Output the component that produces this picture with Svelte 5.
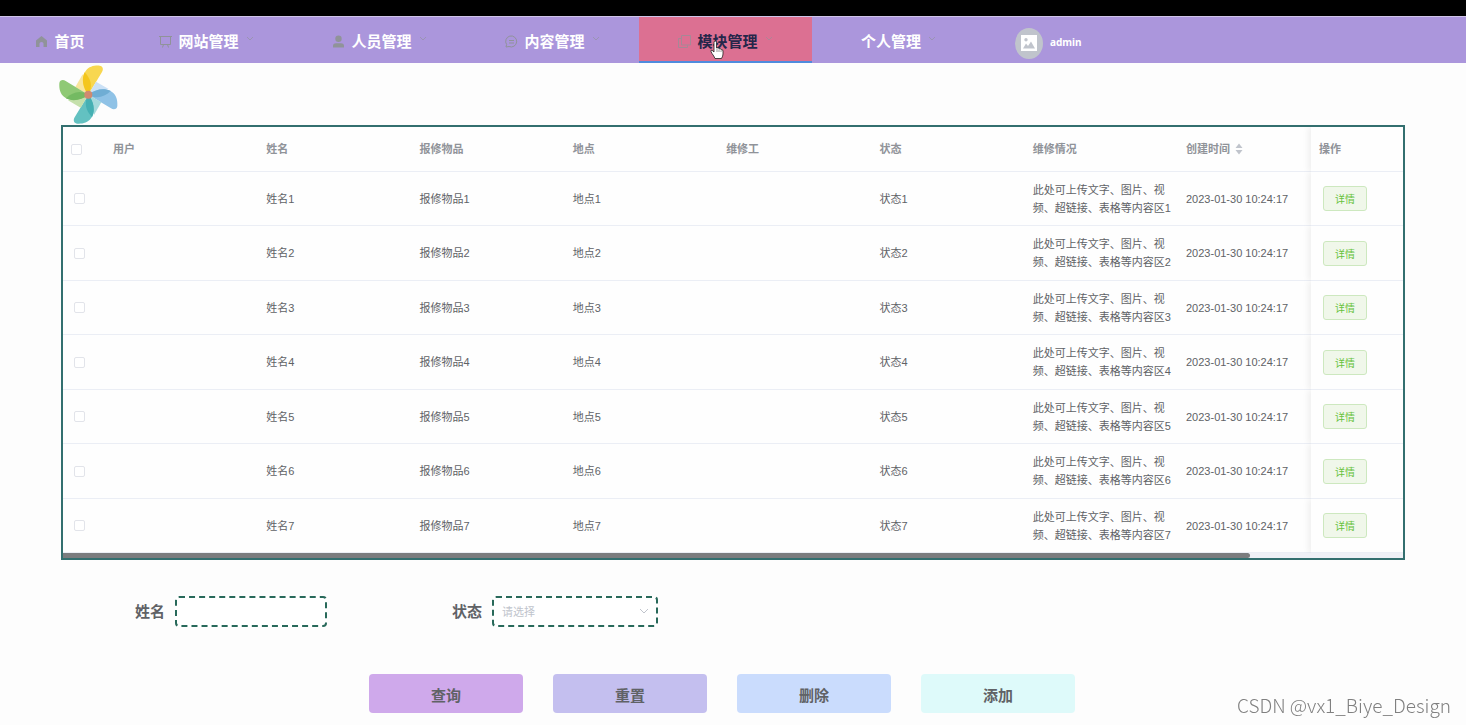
<script>
    const menus = [
        { label: "网站管理", icon: "board" },
        { label: "人员管理", icon: "user" },
        { label: "内容管理", icon: "chat" },
        { label: "模块管理", icon: "copy" },
        { label: "个人管理", icon: "" }
    ];

    const columns = ["用户", "姓名", "报修物品", "地点", "维修工", "状态", "维修情况"];
    const rows = [1, 2, 3, 4, 5, 6, 7];

    const blades = [
        { angle: 0, light: "#f9e59c", main: "#f8d750", dark: "#f4c61c" },
        { angle: 90, light: "#cbe1f6", main: "#8fc2e6", dark: "#6fadd4" },
        { angle: 180, light: "#a5dadc", main: "#63c1c1", dark: "#45b0b3" },
        { angle: 270, light: "#c5e0ac", main: "#8fc975", dark: "#74ba62" }
    ];

    let active = $state("模块管理");
    let name = $state("");
    let status = $state("");
    let checked = $state([]);

    function toggleAll(e) {
        checked = e.target.checked ? [...rows] : [];
    }

    function reset() {
        name = "";
        status = "";
    }
</script>

<div class="top-strip"></div>

<nav class="nav">
    <button class="nav-item home" class:active={active === "首页"} onclick={() => (active = "首页")}>
        <svg class="icon" viewBox="0 0 13 13"><path d="M6.500 1 L12 5.500 V12 H8.500 V8.500 Q8.500 7 6.500 7 Q4.500 7 4.500 8.500 V12 H1 V5.500 Z" fill="currentColor" /></svg>
        <span>首页</span>
    </button>

    {#each menus as menu}
        <button class="nav-item" class:active={active === menu.label} onclick={() => (active = menu.label)}>
            {#if menu.icon === "board"}
                <svg class="icon line" viewBox="0 0 13 13"><path d="M0 1.500 H13 M1.500 1.500 V9.500 H11.500 V1.500 M4.500 9.500 L3.500 12.500 M8.500 9.500 L9.500 12.500" /></svg>
            {:else if menu.icon === "user"}
                <svg class="icon" viewBox="0 0 13 13"><circle cx="6.500" cy="3.800" r="3.200" fill="currentColor" /><path d="M1 12.500 V11 Q1 8.200 4 8.200 H9 Q12 8.200 12 11 V12.500 Z" fill="currentColor" /></svg>
            {:else if menu.icon === "chat"}
                <svg class="icon line" viewBox="0 0 13 13"><path d="M1 12 L1.600 9.500 A5.500 5.500 0 1 1 4 11.500 Z M4 5.500 H9 M4 8 H9" /></svg>
            {:else if menu.icon === "copy"}
                <svg class="icon line faint" viewBox="0 0 13 13"><path d="M3.500 0.500 H12.500 V10 H3.500 Z M3.500 3.500 H0.500 V12.500 H9.500 V10" /></svg>
            {/if}
            <span>{menu.label}</span>
            <svg class="arrow" viewBox="0 0 8 8"><path d="M1 2 L4 5 L7 2" /></svg>

            {#if menu.label === "模块管理"}
                <svg class="pointer" viewBox="0 0 14 20">
                    <path d="M4 12 V2.500 Q4 1 5.300 1 Q6.500 1 6.500 2.500 V8 Q8.800 7 9 8.800 Q11 8 11.200 9.800 Q13 9.300 13 11 V14 Q13 16 11.500 18.500 H5 Q4 16 2 13.500 L1 11.500 Q0.500 10 2 10.200 Z" fill="#fff" stroke="#222" stroke-width="0.800" />
                    <path d="M7 9 V12 M9 9.500 V12 M11 10.500 V12" stroke="#555" stroke-width="0.600" />
                </svg>
            {/if}
        </button>
    {/each}

    <div class="account">
        <span class="avatar">
            <svg viewBox="0 0 16 16"><path fill-rule="evenodd" d="M0 0 H16 V16 H0 Z M2 13.500 H14 L10 6.500 L7 11 L5 8.500 Z M5 3 A1.700 1.700 0 1 0 5 6.400 A1.700 1.700 0 1 0 5 3 Z" fill="#fff" /></svg>
        </span>
        <span class="account-name">admin</span>
    </div>
</nav>

<main>
    <svg class="logo" viewBox="-88 -89 177 177">
        {#each blades as blade}
            <g transform="rotate({blade.angle})">
                <path d="M0 0 L-39 -23 L-17 -61 Z" fill={blade.light} />
                <path d="M0 0 C-17 -22 -22 -55 -8 -71 C2 -85 18 -88 34 -87 C44 -86 46 -76 41 -68 Z" fill={blade.main} />
                <path d="M0 0 C-17 -20 -21 -48 -11 -67 C8 -47 14 -25 0 0 Z" fill={blade.dark} />
            </g>
        {/each}
        <circle r="12" fill="#d08a70" />
    </svg>

    <div class="table-box">
        <table>
            <thead>
                <tr>
                    <th class="check">
                        <input type="checkbox" aria-label="全选" checked={checked.length === rows.length} onchange={toggleAll} />
                    </th>
                    {#each columns as column}
                        <th>{column}</th>
                    {/each}
                    <th class="time">
                        创建时间
                        <svg class="sort" viewBox="0 0 8 12"><path d="M4 0.500 L7.500 5 H0.500 Z M4 11.500 L7.500 7 H0.500 Z" fill="#c0c4cc" /></svg>
                    </th>
                    <th class="action">操作</th>
                </tr>
            </thead>
            <tbody>
                {#each rows as n}
                    <tr>
                        <td class="check">
                            <input type="checkbox" aria-label="选择姓名{n}" value={n} bind:group={checked} />
                        </td>
                        <td></td>
                        <td>姓名{n}</td>
                        <td>报修物品{n}</td>
                        <td>地点{n}</td>
                        <td></td>
                        <td>状态{n}</td>
                        <td>此处可上传文字、图片、视频、超链接、表格等内容区{n}</td>
                        <td>2023-01-30 10:24:17</td>
                        <td class="action"><button class="detail">详情</button></td>
                    </tr>
                {/each}
            </tbody>
        </table>
        <div class="scrollbar"><div class="thumb"></div></div>
    </div>

    <form onsubmit={(e) => e.preventDefault()}>
        <div class="fields">
            <div class="field">
                <label for="name">姓名</label>
                <input id="name" type="text" bind:value={name} />
            </div>
            <div class="field">
                <label for="status">状态</label>
                <div class="select">
                    <select id="status" bind:value={status}>
                        <option value="">请选择</option>
                        {#each rows as n}
                            <option value={n}>状态{n}</option>
                        {/each}
                    </select>
                    <svg viewBox="0 0 10 10"><path d="M1 3 L5 7 L9 3" /></svg>
                </div>
            </div>
        </div>

        <div class="buttons">
            <button class="search">查询</button>
            <button class="reset" type="button" onclick={reset}>重置</button>
            <button class="delete" type="button">删除</button>
            <button class="add" type="button">添加</button>
        </div>
    </form>
</main>

<div class="watermark">CSDN @vx1_Biye_Design</div>

<style>
    :global(body) {
        margin: 0;
        background: #fdfdfd;
        color: #606266;
        font-family: "Liberation Sans", "Noto Sans CJK SC", sans-serif;
        font-size: 11px;
    }

    * {
        box-sizing: border-box;
    }

    button, input, select {
        font-family: inherit;
        margin: 0;
    }

    button {
        cursor: pointer;
    }

    .top-strip {
        height: 16px;
        background: #000;
    }

    .nav {
        display: flex;
        height: 47px;
        background: #ab96dc;
        border-top: 1px solid #cfc4e8;
    }

    .nav-item {
        position: relative;
        display: flex;
        align-items: center;
        justify-content: center;
        width: 173px;
        padding: 3px 0 0;
        border: 0;
        border-bottom: 2px solid transparent;
        background: none;
        color: #fff;
        font-size: 15px;
        font-weight: bold;
    }

    .nav-item.home {
        width: 120px;
    }

    .nav-item.active {
        background: #dc7092;
        border-bottom-color: #4f8bdd;
        color: #26264a;
    }

    .icon {
        width: 13px;
        height: 13px;
        margin: 2px 6px 0 0;
        color: #909399;
    }

    .icon.line, .arrow {
        fill: none;
        stroke: #909399;
    }

    .icon.faint {
        opacity: 0.7;
    }

    .arrow {
        width: 8px;
        height: 8px;
        margin: 0 0 4px 7px;
        opacity: 0.6;
    }

    .pointer {
        position: absolute;
        left: 71px;
        top: 23px;
        width: 14px;
        height: 20px;
        fill: none;
    }

    .account {
        display: flex;
        align-items: center;
        gap: 7px;
        padding: 6px 0 0 30px;
    }

    .account-name {
        padding-bottom: 3px;
        color: #fff;
        font-family: "Noto Sans", sans-serif;
        font-size: 10px;
        font-weight: bold;
    }

    .avatar {
        display: flex;
        align-items: center;
        justify-content: center;
        width: 28px;
        height: 31px;
        border-radius: 50%;
        background: #c0c4cc;
    }

    .avatar svg {
        width: 16px;
        height: 16px;
    }

    main {
        padding: 2px 61px 0;
    }

    .logo {
        display: block;
        width: 59px;
        height: 59px;
        margin: 0 0 1px -2px;
    }

    .table-box {
        border: 2px solid #336f6f;
        background: #fefefe;
    }

    table {
        width: 100%;
        table-layout: fixed;
        border-collapse: separate;
        border-spacing: 0;
    }

    th, td {
        padding: 0 4px 0 8px;
        border-bottom: 1px solid #ebeef5;
        line-height: 18px;
        text-align: left;
    }

    th {
        height: 45px;
        color: #909399;
        font-weight: bold;
    }

    td {
        height: 54px;
    }

    tr:nth-child(even) td {
        height: 55px;
    }

    th.check {
        width: 42px;
    }

    td.check {
        padding-left: 11px;
    }

    th.time {
        width: 133px;
    }

    .sort {
        width: 8px;
        height: 12px;
        margin-left: 2px;
        vertical-align: -2px;
    }

    .action {
        width: 92px;
        box-shadow: -3px 0 6px rgba(0, 0, 0, 0.06);
        clip-path: inset(0 0 0 -10px);
    }

    td.action {
        padding-left: 12px;
    }

    input[type="checkbox"] {
        display: block;
        appearance: none;
        width: 11px;
        height: 11px;
        border: 1px solid #e2e4ea;
        border-radius: 2px;
        background: #fff;
    }

    input[type="checkbox"]:checked {
        background: #409eff;
    }

    .detail {
        display: block;
        width: 44px;
        height: 25px;
        padding: 0;
        border: 1px solid #cde8bf;
        border-radius: 3px;
        background: #f0f7ea;
        color: #67c23a;
        font-size: 10px;
    }

    .scrollbar {
        height: 5px;
        background: #eff0f6;
    }

    .thumb {
        width: 88.6%;
        height: 5px;
        border-radius: 0 3px 3px 0;
        background: #7b7c7e;
    }

    .fields {
        display: flex;
        gap: 125px;
        padding: 36px 0 0 74px;
    }

    .field {
        display: flex;
        align-items: center;
        gap: 10px;
    }

    .field label {
        padding-bottom: 2px;
        font-size: 15px;
        font-weight: bold;
    }

    .field input, .field select {
        width: 152px;
        height: 31px;
        padding: 0 8px;
        border: 2px dashed #28695a;
        border-radius: 4px;
        background: #fff;
        color: #606266;
        font-size: 11px;
        outline: none;
    }

    .field select {
        appearance: none;
        width: 166px;
        color: #c0c4cc;
    }

    .select {
        position: relative;
    }

    .select svg {
        position: absolute;
        right: 9px;
        top: 10px;
        width: 10px;
        height: 10px;
        fill: none;
        stroke: #c0c4cc;
        pointer-events: none;
    }

    .buttons {
        display: flex;
        justify-content: center;
        gap: 30px;
        padding: 47px 22px 12px 0;
    }

    .buttons button {
        width: 154px;
        height: 39px;
        padding: 2px 0 0;
        border: 0;
        border-radius: 4px;
        color: #606266;
        font-size: 15px;
        font-weight: bold;
    }

    .buttons .search { background: #cfa9eb; }
    .buttons .reset { background: #c4bfef; }
    .buttons .delete { background: #cadcfd; }
    .buttons .add { background: #defafa; }

    .watermark {
        position: fixed;
        right: 15px;
        bottom: 5px;
        color: #808080;
        font-family: "Noto Sans CJK SC", sans-serif;
        font-size: 19px;
        font-weight: 300;
        line-height: 30px;
    }
</style>
